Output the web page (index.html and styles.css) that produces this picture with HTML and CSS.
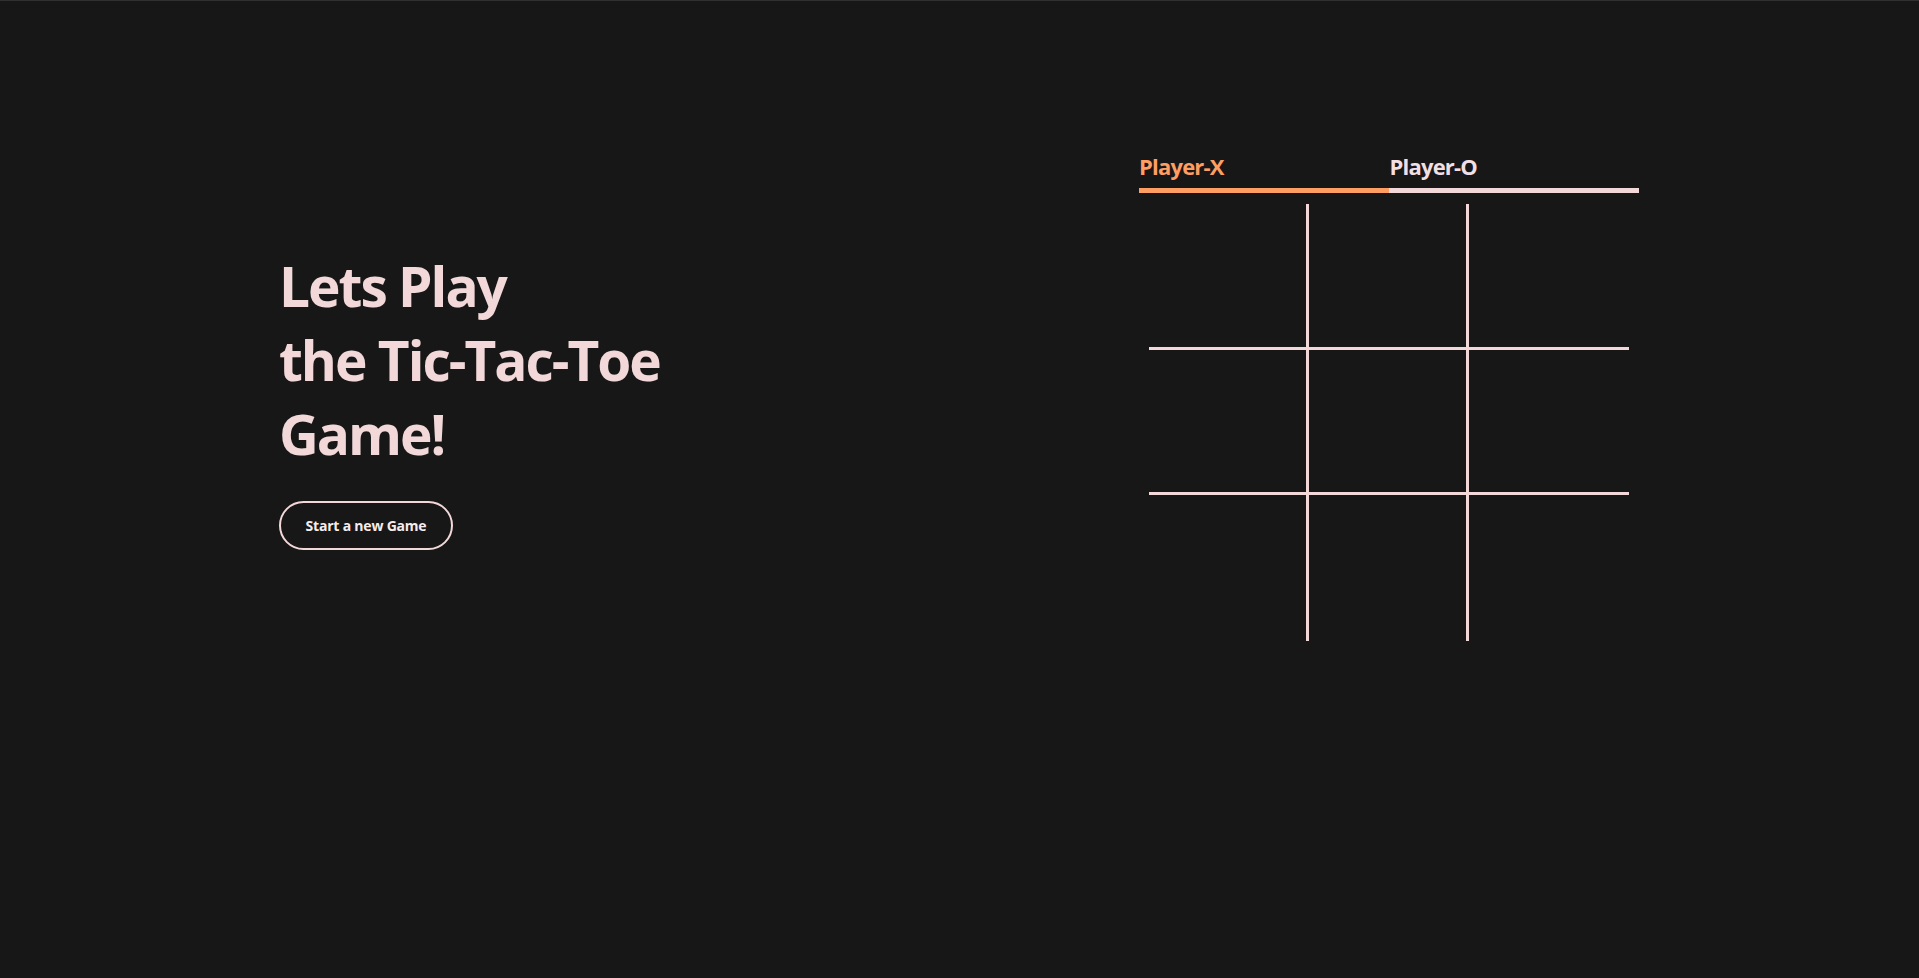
FILE: index.html
```html
<!DOCTYPE html>
<html lang="en">
<head>
<meta charset="utf-8">
<title>Tic-Tac-Toe</title>
<link rel="stylesheet" href="styles.css">
</head>
<body>
<main class="page">
  <section class="intro">
    <h1 class="title">Lets Play<br>the Tic-Tac-Toe<br>Game!</h1>
    <button class="start-btn" type="button">Start a new Game</button>
  </section>
  <section class="game">
    <div class="players">
      <div class="player player-x">Player-X</div>
      <div class="player player-o">Player-O</div>
    </div>
    <div class="board">
      <div class="cell"></div><div class="cell"></div><div class="cell"></div>
      <div class="cell"></div><div class="cell"></div><div class="cell"></div>
      <div class="cell"></div><div class="cell"></div><div class="cell"></div>
    </div>
  </section>
</main>
</body>
</html>
```
FILE: styles.css
```css
* { box-sizing: border-box; }
html, body { height: 100%; }
body {
  margin: 0;
  background: #171717;
  border-top: 1px solid #303030;
  font-family: "Open Sans", "Noto Sans", sans-serif;
  color: #f2d8d8;
}
.page {
  display: flex;
  justify-content: space-between;
  align-items: flex-start;
  padding: 150px 280px 0 279px;
}
.intro {
  margin-top: 98px;
  display: flex;
  flex-direction: column;
  align-items: flex-start;
}
.title {
  margin: 0 0 30px 0;
  font-size: 55px;
  line-height: 74px;
  font-weight: 700;
  letter-spacing: -2px;
  color: #f2d8d8;
}
.start-btn {
  width: 174px;
  height: 49px;
  border: 2px solid #f2d8d8;
  border-radius: 25px;
  background: transparent;
  color: #f7ecec;
  font-family: "Open Sans", "Noto Sans", sans-serif;
  font-size: 14px;
  font-weight: 700;
  letter-spacing: -0.2px;
  padding: 0;
}
.game {
  width: 500px;
}
.players {
  display: flex;
}
.player {
  flex: 1;
  font-size: 22px;
  font-weight: 700;
  letter-spacing: -0.8px;
  line-height: 30px;
  padding: 0 0 7px 0;
  border-bottom: 5px solid #f2d8d8;
}
.player-x {
  color: #ff9e63;
  border-bottom-color: #ff9e63;
}
.player-o {
  color: #f1dfe4;
  padding-left: 1px;
}
.board {
  margin: 11px 10px 0 10px;
  display: grid;
  grid-template-columns: 157px 157px 160px;
  grid-template-rows: 143px 142px 146px;
  gap: 3px;
  background: #f2d8d8;
}
.cell {
  background: #171717;
}
```
